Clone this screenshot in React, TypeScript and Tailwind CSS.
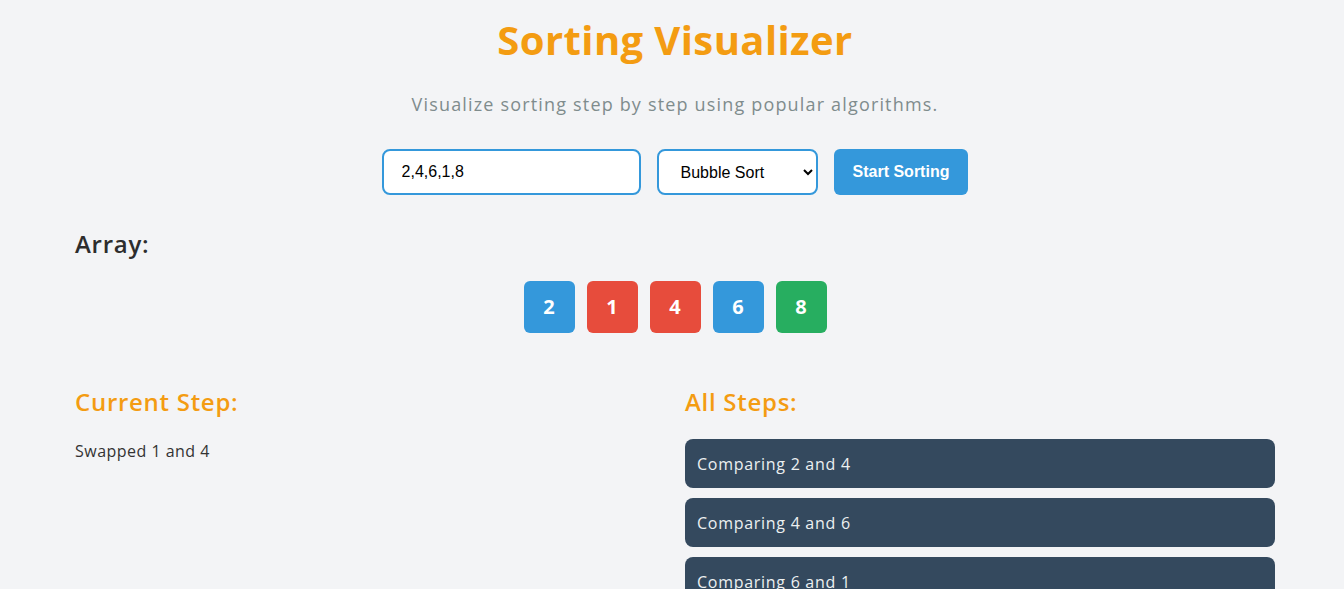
import { useState } from "react";

const font = { fontFamily: "'Open Sans', 'DejaVu Sans', sans-serif" };

const bars = [
  { value: 2, color: "bg-[#3498db]" },
  { value: 1, color: "bg-[#e74c3c]" },
  { value: 4, color: "bg-[#e74c3c]" },
  { value: 6, color: "bg-[#3498db]" },
  { value: 8, color: "bg-[#27ae60]" },
];

const steps = [
  "Comparing 2 and 4",
  "Comparing 4 and 6",
  "Comparing 6 and 1",
  "Swapped 6 and 1",
  "Comparing 6 and 8",
];

export default function App() {
  const [input, setInput] = useState("2,4,6,1,8");

  return (
    <div className="min-h-screen bg-[#f3f4f6]" style={font}>
      <div className="ml-[75px] w-[1200px] pt-[16px] pb-10">
        <h1 className="text-center text-[40px] font-bold leading-[48px] tracking-[0.01em] text-[#f39c12]">
          Sorting Visualizer
        </h1>
        <p className="mt-[26px] text-center text-[18px] leading-[29px] tracking-[0.065em] text-[#7f8c8d]">
          Visualize sorting step by step using popular algorithms.
        </p>

        <div className="mt-[30px] flex justify-center gap-4 font-['Liberation_Sans',Arial,sans-serif]">
          <input
            value={input}
            onChange={(e) => setInput(e.target.value)}
            className="h-[46px] w-[259px] rounded-lg border-2 border-[#3498db] bg-white px-[18px] text-[16px] text-black outline-none"
          />
          <select className="h-[46px] w-[161px] rounded-lg border-2 border-[#3498db] bg-white pl-[18px] pr-2 text-[16px] text-black outline-none">
            <option>Bubble Sort</option>
            <option>Selection Sort</option>
            <option>Insertion Sort</option>
          </select>
          <button className="h-[46px] rounded-md bg-[#3498db] px-[19px] text-[16px] font-bold text-white">
            Start Sorting
          </button>
        </div>

        <h2 className="mt-[31px] text-[24px] font-semibold leading-[36px] tracking-[0.03em] text-[#2d2d2d]">
          Array:
        </h2>
        <div className="mt-[19px] flex justify-center gap-3">
          {bars.map((b, i) => (
            <div
              key={i}
              className={`flex h-[52px] w-[51px] items-center justify-center rounded-md text-[20px] font-bold text-white ${b.color}`}
            >
              {b.value}
            </div>
          ))}
        </div>

        <div className="mt-[51px] grid grid-cols-2 gap-5">
          <div>
            <h3 className="text-[24px] font-semibold leading-[36px] tracking-[0.03em] text-[#f39c12]">
              Current Step:
            </h3>
            <p className="mt-[19px] text-[16px] leading-[24px] tracking-[0.03em] text-[#333]">
              Swapped 1 and 4
            </p>
          </div>
          <div>
            <h3 className="text-[24px] font-semibold leading-[36px] tracking-[0.03em] text-[#f39c12]">
              All Steps:
            </h3>
            <ul className="mt-[19px] flex flex-col gap-[10px]">
              {steps.map((s) => (
                <li
                  key={s}
                  className="flex h-[49px] items-center rounded-lg bg-[#34495e] px-3 text-[16px] tracking-[0.045em] text-[#ecf0f1]"
                >
                  {s}
                </li>
              ))}
            </ul>
          </div>
        </div>
      </div>
    </div>
  );
}
